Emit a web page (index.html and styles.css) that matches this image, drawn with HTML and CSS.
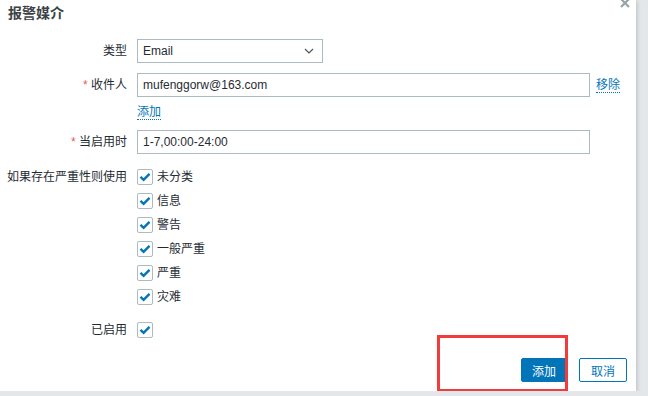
FILE: index.html
```html
<!DOCTYPE html>
<html lang="zh-CN">
  <head>
    <meta charset="UTF-8" />
    <meta name="viewport" content="width=device-width, initial-scale=1.0" />
    <title>报警媒介</title>
    <link rel="stylesheet" href="styles.css">
  </head>
  <body>
    <div class="dialog">
      <button class="dialog-close" title="关闭">
        <svg width="10" height="10" viewBox="0 0 10 10">
          <path d="M1 1 L9 9 M9 1 L1 9" stroke="#9aa3a8" stroke-width="2.2" fill="none" />
        </svg>
      </button>

      <h4 class="dialog-title">报警媒介</h4>

      <form class="media-form">
        <div class="form-row">
          <label class="form-label">类型</label>
          <div class="form-field">
            <div class="select-box">
              <span>Email</span>
              <svg width="10" height="6" viewBox="0 0 10 6">
                <path d="M1 1 L5 5 L9 1" stroke="#4b565c" stroke-width="1.2" fill="none" />
              </svg>
            </div>
          </div>
        </div>

        <div class="form-row">
          <label class="form-label"><span class="req">*</span> 收件人</label>
          <div class="form-field">
            <div class="recipient-line">
              <input class="text-input" type="text" value="mufenggorw@163.com" />
              <a class="link" href="#">移除</a>
            </div>
            <a class="link add-link" href="#">添加</a>
          </div>
        </div>

        <div class="form-row">
          <label class="form-label"><span class="req">*</span> 当启用时</label>
          <div class="form-field">
            <input class="text-input" type="text" value="1-7,00:00-24:00" />
          </div>
        </div>

        <div class="form-row severity-row">
          <label class="form-label">如果存在严重性则使用</label>
          <div class="form-field">
            <ul class="check-list" id="severity-list"></ul>
          </div>
        </div>

        <div class="form-row enabled-row">
          <label class="form-label">已启用</label>
          <div class="form-field">
            <span class="check-box"></span>
          </div>
        </div>
      </form>

      <div class="dialog-footer">
        <button class="btn btn-primary">添加</button>
        <button class="btn btn-alt">取消</button>
      </div>

      <div class="highlight-box"></div>
    </div>

    <script>
      let severities = ["未分类", "信息", "警告", "一般严重", "严重", "灾难"];
      let list = document.getElementById("severity-list");
      severities.forEach((name) => {
        let item = document.createElement("li");
        item.innerHTML = '<span class="check-box"></span><span>' + name + "</span>";
        list.appendChild(item);
      });

      let tick =
        '<svg width="12" height="10" viewBox="0 0 12 10"><path d="M1.5 4.8 L4.6 7.8 L10.5 1.8" stroke="#0275b8" stroke-width="2.4" fill="none" /></svg>';
      document.querySelectorAll(".check-box").forEach((box) => {
        box.innerHTML = tick;
      });
    </script>
  </body>
</html>
```

FILE: styles.css
```css
/* Global styles */
body {
  margin: 0;
  font-family: "Liberation Sans", Arial, "Noto Sans CJK SC", sans-serif;
  font-size: 12px;
  color: #1f2c33;
  background-color: #e3e7e9;
  overflow: hidden;
}

/* Dialog */
.dialog {
  position: relative;
  width: 636px;
  height: 391px;
  background-color: #ffffff;
  box-shadow: 1px 1px 4px rgba(0, 0, 0, 0.18);
}

.dialog-close {
  position: absolute;
  top: -4px;
  right: 6px;
  padding: 0;
  border: none;
  background: none;
  cursor: pointer;
}

.dialog-title {
  margin: 0;
  padding: 4px 0 0 8px;
  font-size: 14px;
  line-height: 18px;
  font-weight: bold;
  color: #3c4245;
}

/* Form */
.media-form {
  margin-top: 17px;
}

.form-row {
  display: grid;
  grid-template-columns: 127px 1fr;
  column-gap: 10px;
  margin-bottom: 10px;
}

.form-label {
  text-align: right;
  line-height: 24px;
  white-space: nowrap;
}

.req {
  color: #e35d5d;
}

.form-field {
  display: flex;
  flex-direction: column;
  align-items: flex-start;
}

.select-box {
  box-sizing: border-box;
  width: 186px;
  height: 24px;
  padding: 0 8px 0 5px;
  border: 1px solid #acbbc2;
  display: flex;
  align-items: center;
  justify-content: space-between;
}

.recipient-line {
  display: flex;
  align-items: center;
  gap: 6px;
}

.text-input {
  box-sizing: border-box;
  width: 453px;
  height: 24px;
  margin: 0;
  padding: 0 5px;
  border: 1px solid #acbbc2;
  font: inherit;
  color: #1f2c33;
  outline: none;
}

.link {
  color: #0275b8;
  text-decoration: none;
  border-bottom: 1px dotted #0275b8;
  line-height: 14px;
}

.add-link {
  margin-top: 8px;
}

/* Severity checkboxes */
.severity-row {
  margin-top: 15px;
}

.severity-row .form-label {
  line-height: 16px;
}

.check-list {
  list-style: none;
  margin: 0;
  padding: 0;
  display: flex;
  flex-direction: column;
  gap: 8px;
}

.check-list li {
  display: flex;
  align-items: center;
  gap: 4px;
  line-height: 16px;
}

.check-box {
  box-sizing: border-box;
  width: 16px;
  height: 16px;
  border: 1px solid #acbbc2;
  border-radius: 2px;
  display: flex;
  align-items: center;
  justify-content: center;
}

.enabled-row {
  margin-top: 17px;
}

.enabled-row .form-label {
  line-height: 16px;
}

/* Footer */
.dialog-footer {
  margin-top: 20px;
  padding-right: 9px;
  display: flex;
  justify-content: flex-end;
  gap: 12px;
}

.btn {
  height: 24px;
  padding: 0;
  border: 1px solid #0275b8;
  border-radius: 2px;
  font: inherit;
  cursor: pointer;
}

.btn-primary {
  width: 46px;
  background-color: #0275b8;
  color: #ffffff;
}

.btn-alt {
  width: 48px;
  background-color: #ffffff;
  color: #0275b8;
}

/* Annotation */
.highlight-box {
  position: absolute;
  left: 437px;
  top: 335px;
  width: 125px;
  height: 51px;
  border: 3px solid #f23b3b;
}
```
